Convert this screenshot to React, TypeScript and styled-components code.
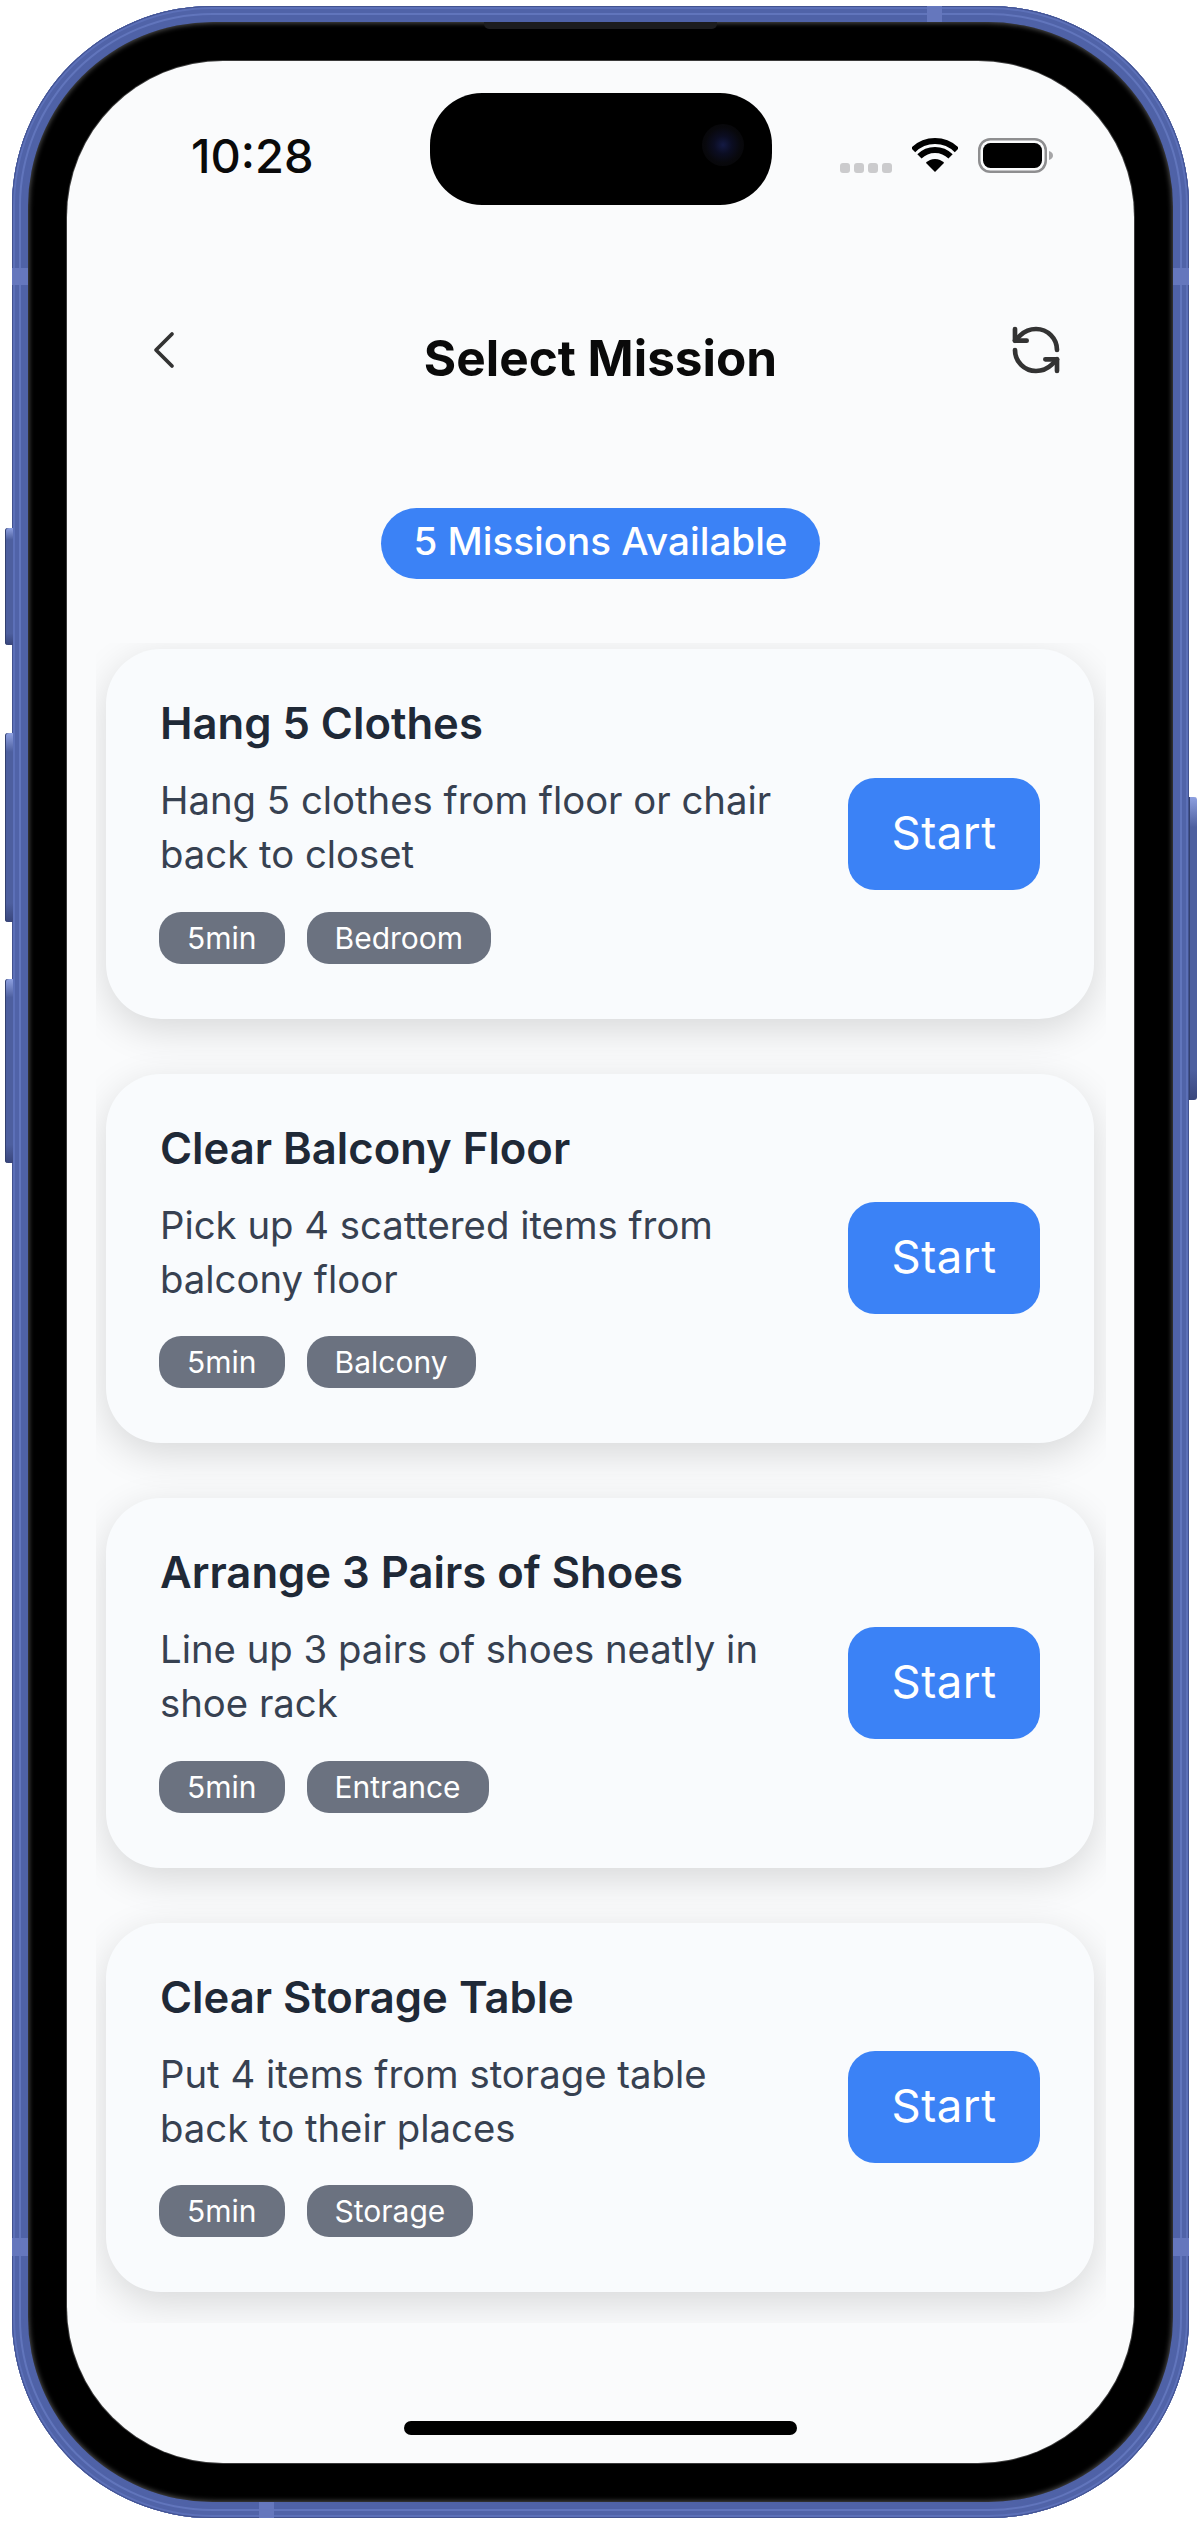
import React from 'react'
import styled, { createGlobalStyle } from 'styled-components'
import { ChevronLeft, RefreshCcw } from 'lucide-react'

const GlobalStyle = createGlobalStyle`
  html, body {
    margin: 0;
    padding: 0;
    background: #fff;
  }
  body {
    font-family: Inter, "Liberation Sans", sans-serif;
  }
`

const Page = styled.div`
  width: 1200px;
  height: 2524px;
  padding: 6px 11px 6px 12px;
  box-sizing: border-box;
`
const Frame = styled.div`
  position: relative;
  height: 100%;
  box-sizing: border-box;
  padding: 16px;
  border-radius: 200px;
  background: #4f62a7;
  box-shadow: inset 0 0 0 1px #42528f, inset 0 0 0 3px #5c70b8, inset 0 0 0 7px #5063a8, inset 0 0 0 9px #6175bc, inset 0 0 0 11px #4f62a7;
`
const SideButton = styled.div<{ $side: 'left' | 'right'; $top: number; $height: number }>`
  position: absolute;
  top: ${p => p.$top}px;
  height: ${p => p.$height}px;
  width: 8px;
  ${p => (p.$side === 'left' ? 'left: -7px; border-radius: 3px 0 0 3px;' : 'right: -8px; border-radius: 0 3px 3px 0;')}
  background: linear-gradient(#8ea0e0 0, #4d5f9f 10%, #4d5f9f 90%, #39467c 100%);
  box-shadow: inset 1px 0 0 #33406f;
`
const Band = styled.div<{ $edge: 'left' | 'right' | 'top' | 'bottom'; $at: number; $length: number }>`
  position: absolute;
  background: #6577bd;
  ${p =>
    p.$edge === 'left' || p.$edge === 'right'
      ? `${p.$edge}: 0; top: ${p.$at}px; width: 16px; height: ${p.$length}px;`
      : `${p.$edge}: 0; left: ${p.$at}px; height: 16px; width: ${p.$length}px;`}
`
const Speaker = styled.div`
  position: absolute;
  top: 16px;
  left: 472px;
  width: 233px;
  height: 7px;
  background: #1c1c1e;
  border-radius: 0 0 5px 5px;
  z-index: 1;
`
const Bezel = styled.div`
  height: 100%;
  box-sizing: border-box;
  padding: 39px;
  border-radius: 185px;
  background: #000;
  box-shadow: inset 0 0 5px 1px rgba(255, 255, 255, 0.32);
`
const Screen = styled.div`
  height: 100%;
  border-radius: 156px;
  background: #fafbfc;
  display: flex;
  flex-direction: column;
  overflow: hidden;
  box-shadow: 0 0 0 1px #3a3a3a;
`
const StatusBar = styled.div`
  display: grid;
  grid-template-columns: 363px 342px 1fr;
  padding-top: 32px;
  height: 112px;
`
const Time = styled.div`
  padding: 39px 0 0 124px;
  font-size: 47px;
  line-height: 47px;
  font-weight: 500;
  color: #0a0a0a;
`
const Island = styled.div`
  height: 112px;
  border-radius: 52px;
  background: #000;
  display: flex;
  align-items: center;
  justify-content: flex-end;
  padding-right: 28px;
  box-sizing: border-box;
`
const Camera = styled.div`
  width: 42px;
  height: 42px;
  margin-top: -8px;
  border-radius: 50%;
  background: radial-gradient(circle, #141a44 0, #0b0d22 30%, #08080c 60%, #050505 100%);
`
const StatusIcons = styled.div`
  padding: 45px 0 0 68px;
  display: flex;
  align-items: flex-end;
  height: 35px;
`
const Dots = styled.div`
  display: flex;
  gap: 4px;
  margin-right: 20px;
`
const Dot = styled.span`
  width: 10px;
  height: 10px;
  border-radius: 3px;
  background: #cbcbcd;
`
const BatteryIcon = styled.svg`
  margin-left: 20px;
  display: block;
`
const Header = styled.div`
  display: grid;
  grid-template-columns: 1fr auto 1fr;
  align-items: center;
  padding: 0 70px 0 65px;
  margin-top: 115px;
  height: 76px;
`
const IconButton = styled.div<{ $end?: boolean }>`
  display: flex;
  justify-content: ${p => (p.$end ? 'flex-end' : 'flex-start')};
  color: #333;
  margin-top: -16px;
  & svg {
    display: block;
  }
`
const Title = styled.h1`
  margin: 0 0 0 5px;
  font-size: 49.5px;
  line-height: 76px;
  font-weight: 700;
  color: #0a0a0a;
`
const Pill = styled.div`
  align-self: center;
  margin-top: 112px;
  height: 71px;
  line-height: 66px;
  padding: 0 32.5px;
  border-radius: 36px;
  background: #3b82f6;
  color: #fff;
  font-size: 38.6px;
  font-weight: 500;
`
const List = styled.div`
  margin: 64px 28px 0 29px;
  height: 1680px;
  box-sizing: border-box;
  padding: 6px 12px 6px 10px;
  overflow: hidden;
  display: flex;
  flex-direction: column;
  gap: 55px;
`
const Card = styled.div`
  flex: none;
  height: 369.5px;
  box-sizing: border-box;
  padding: 0 54px;
  display: flex;
  align-items: center;
  gap: 58px;
  border-radius: 55px;
  background: #f9fbfd;
  box-shadow: 0 11px 38px rgba(0, 0, 0, 0.14);
`
const CardBody = styled.div`
  flex: 1;
  min-width: 0;
  padding-bottom: 7.5px;
`
const CardTitle = styled.h2`
  margin: 0;
  font-size: 43.6px;
  line-height: 56px;
  font-weight: 600;
  color: #1f2937;
`
const CardText = styled.p`
  margin: 21px 0 0;
  font-size: 38.3px;
  line-height: 54px;
  font-weight: 400;
  color: #374151;
`
const Tags = styled.div`
  display: flex;
  gap: 22px;
  margin: 30.5px 0 0 -1px;
`
const Tag = styled.span`
  height: 52px;
  line-height: 52px;
  padding: 0 28px;
  border-radius: 22px;
  background: #6b7280;
  color: #fff;
  font-size: 30px;
`
const StartButton = styled.button`
  flex: none;
  width: 192px;
  height: 112px;
  padding: 0 0 3px;
  border: 0;
  border-radius: 27px;
  background: #3b82f6;
  color: #fff;
  font-family: inherit;
  font-size: 45.5px;
  font-weight: 400;
  letter-spacing: 0.5px;
`
const HomeBar = styled.div`
  align-self: center;
  width: 393px;
  height: 14px;
  margin-top: auto;
  margin-bottom: 28px;
  border-radius: 7px;
  background: #000;
`

const missions = [
  { title: 'Hang 5 Clothes', text: 'Hang 5 clothes from floor or chair back to closet', place: 'Bedroom' },
  { title: 'Clear Balcony Floor', text: 'Pick up 4 scattered items from balcony floor', place: 'Balcony' },
  { title: 'Arrange 3 Pairs of Shoes', text: 'Line up 3 pairs of shoes neatly in shoe rack', place: 'Entrance' },
  { title: 'Clear Storage Table', text: 'Put 4 items from storage table back to their places', place: 'Storage' },
]

const WifiIcon = () => (
  <svg width="46" height="35" viewBox="0 0 46 35" fill="none">
    <path d="M23 34 13.8 24.8A13 13 0 0 1 32.2 24.8Z" fill="#000" />
    <path d="M7.44 18.44A22 22 0 0 1 38.56 18.44" stroke="#000" strokeWidth="6" />
    <path d="M1.1 12.08A31 31 0 0 1 44.9 12.08" stroke="#000" strokeWidth="6" />
  </svg>
)

const Battery = () => (
  <BatteryIcon width="75" height="35" viewBox="0 0 75 35" fill="none">
    <rect x="1.25" y="1.25" width="66.5" height="32.5" rx="11" stroke="#8e8e90" strokeWidth="2.5" />
    <rect x="5" y="5" width="59" height="25" rx="7.5" fill="#000" />
    <path d="M71 13c2.5.8 4 2.4 4 4.5s-1.500 3.700-4 4.500Z" fill="#a5a5a7" />
  </BatteryIcon>
)

export default function App() {
  return (
    <Page>
      <GlobalStyle />
      <Frame>
        <SideButton $side="left" $top={522} $height={117} />
        <SideButton $side="left" $top={727} $height={189} />
        <SideButton $side="left" $top={973} $height={184} />
        <SideButton $side="right" $top={791} $height={303} />
        <Band $edge="left" $at={262} $length={17} />
        <Band $edge="right" $at={262} $length={17} />
        <Band $edge="left" $at={2232} $length={18} />
        <Band $edge="right" $at={2232} $length={18} />
        <Band $edge="top" $at={915} $length={15} />
        <Band $edge="bottom" $at={247} $length={15} />
        <Speaker />
        <Bezel>
          <Screen>
            <StatusBar>
              <Time>10:28</Time>
              <Island>
                <Camera />
              </Island>
              <StatusIcons>
                <Dots>
                  <Dot />
                  <Dot />
                  <Dot />
                  <Dot />
                </Dots>
                <WifiIcon />
                <Battery />
              </StatusIcons>
            </StatusBar>
            <Header>
              <IconButton>
                <ChevronLeft size={64} strokeWidth={1.4} />
              </IconButton>
              <Title>Select Mission</Title>
              <IconButton $end>
                <RefreshCcw size={56} strokeWidth={2} />
              </IconButton>
            </Header>
            <Pill>5 Missions Available</Pill>
            <List>
              {missions.map(m => (
                <Card key={m.title}>
                  <CardBody>
                    <CardTitle>{m.title}</CardTitle>
                    <CardText>{m.text}</CardText>
                    <Tags>
                      <Tag>5min</Tag>
                      <Tag>{m.place}</Tag>
                    </Tags>
                  </CardBody>
                  <StartButton>Start</StartButton>
                </Card>
              ))}
            </List>
            <HomeBar />
          </Screen>
        </Bezel>
      </Frame>
    </Page>
  )
}
